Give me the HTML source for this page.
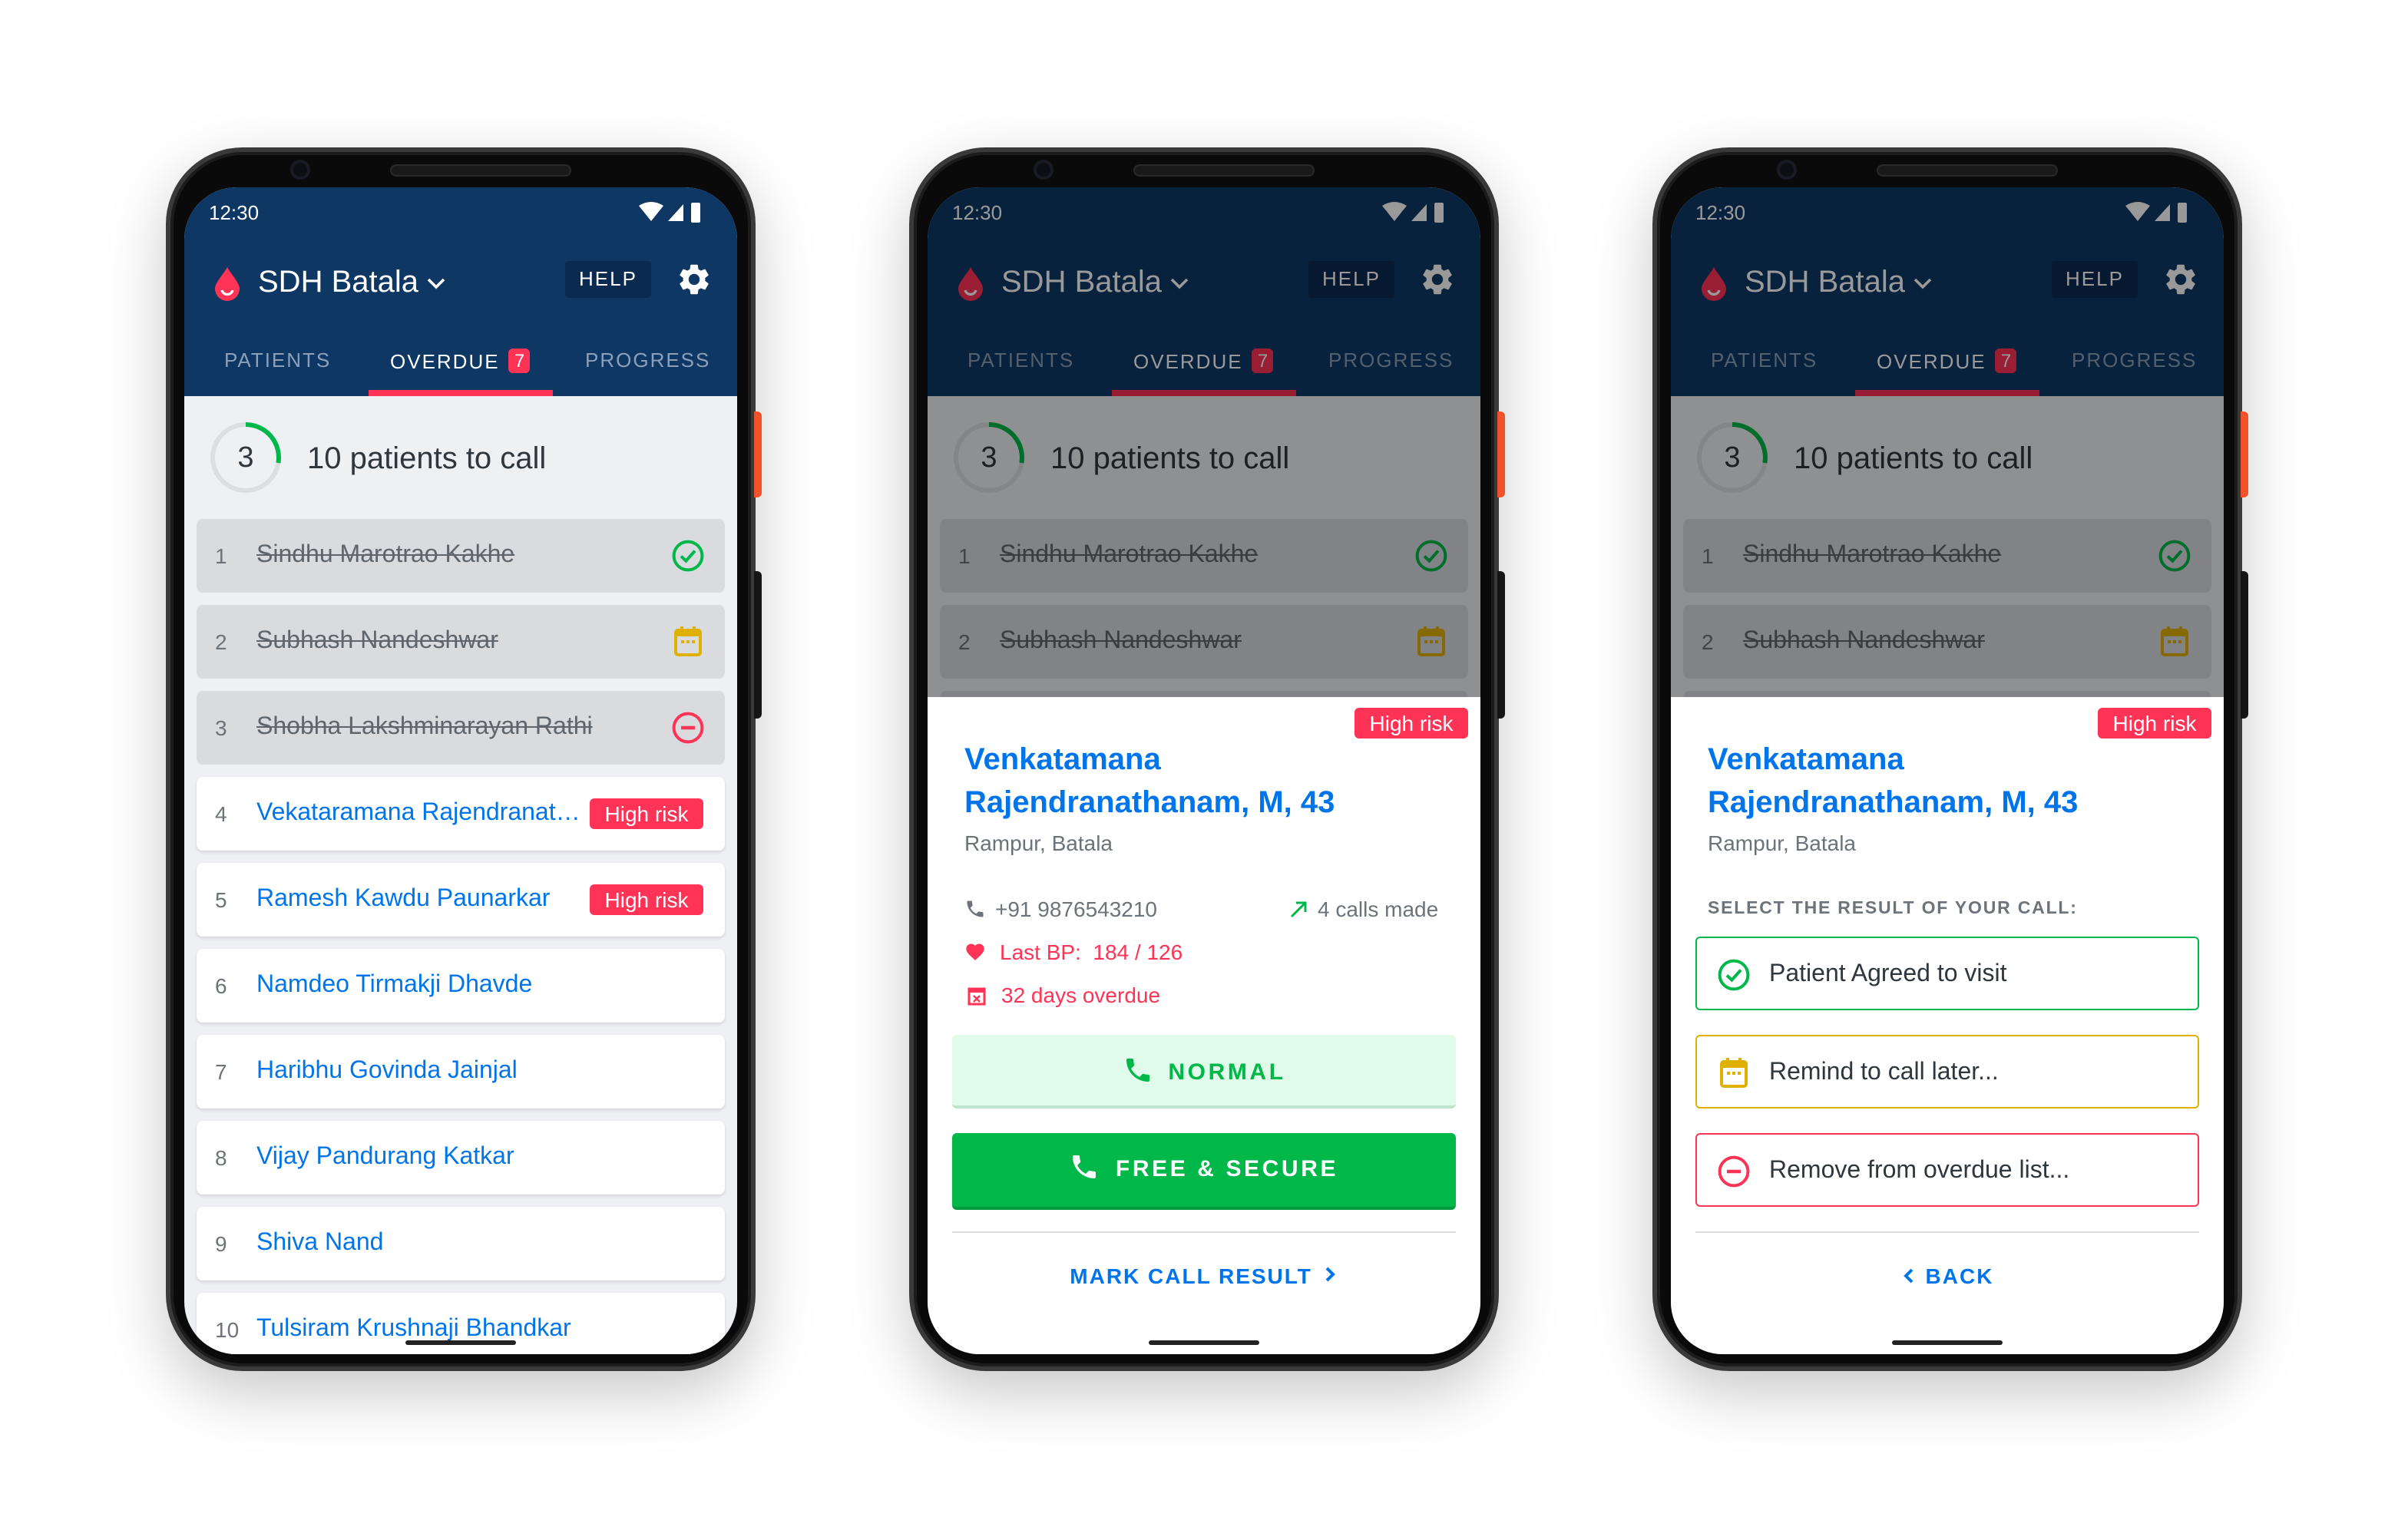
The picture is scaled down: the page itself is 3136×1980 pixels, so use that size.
<!DOCTYPE html>
<html><head><meta charset="utf-8">
<style>
*{margin:0;padding:0;box-sizing:border-box}
html,body{width:3136px;height:1980px;overflow:hidden;background:#fff}
#w{position:absolute;left:0;top:0;width:1568px;height:990px;transform:scale(2);transform-origin:0 0;font-family:"Liberation Sans",Arial,sans-serif}
.p{position:absolute;top:96px;width:384px;height:797px}
.fr{position:absolute;left:0;top:0;width:384px;height:797px;border-radius:50px;background:#0a0a0a;border:3px solid #3a3a3a;box-shadow:0 14px 40px rgba(0,0,0,.22),inset 0 0 0 2px #1c1c1c}
.btn1{position:absolute;left:383px;top:172px;width:5px;height:56px;background:#f0532a;border-radius:0 3px 3px 0}
.btn2{position:absolute;left:383px;top:276px;width:5px;height:96px;background:#151515;border-radius:0 3px 3px 0}
.cam{position:absolute;left:81px;top:8px;width:13px;height:13px;border-radius:50%;background:#0d0d14;border:2px solid #1a1a24}
.spk{position:absolute;left:146px;top:11px;width:118px;height:8px;border-radius:4px;background:#1a1a1a;border:1px solid #2a2a2a}
.scr{position:absolute;left:12px;top:26px;width:360px;height:760px;border-radius:34px;overflow:hidden;background:#eff0f3}
.hdr{position:absolute;left:0;top:0;width:360px;height:136px;background:#0e3764}
.a{position:absolute;white-space:nowrap}
.tm{left:16px;top:9px;color:#fff;font-size:13px}
.tt{left:48px;top:51px;color:#fff;font-size:20px}
.help{left:248px;top:48px;width:56px;height:24px;background:#0a2a50;border-radius:2px;color:#fff;font-size:13px;letter-spacing:1px;text-align:center;line-height:24px}
.tab{top:105px;font-size:13px;letter-spacing:1px;color:#8ba0bb}
.ul{left:120px;top:132px;width:120px;height:4px;background:#ff3355}
.bd{display:inline-block;width:14px;height:16px;background:#ff3355;border-radius:3px;color:#fff;text-align:center;line-height:16px;font-size:12px;letter-spacing:0;margin-left:6px;vertical-align:1px}
.ring{left:17px;top:153px;width:46px;height:46px}
.cnt{left:0;top:166px;width:80px;text-align:center;font-size:19px;color:#2f363d}
.ttl{left:80px;top:166px;font-size:20px;color:#2f363d}
.r{position:absolute;left:8px;width:344px;height:48px;border-radius:4px;background:#fff;box-shadow:0 1px 2px rgba(0,0,0,.12)}
.r.g{background:#d9dbdf;box-shadow:none}
.n{position:absolute;left:12px;top:16px;font-size:14px;color:#6c737a}
.nm{position:absolute;left:39px;top:15px;font-size:16px;color:#0075eb;white-space:nowrap}
.g .nm{color:#5f656c;text-decoration:line-through}
.hr{position:absolute;left:256px;top:14px;width:74px;height:20px;background:#ff3355;border-radius:3px;color:#fff;font-size:14px;text-align:center;line-height:20px}
.ic{position:absolute;left:309px;top:13px}
.ov{position:absolute;left:0;top:0;width:360px;height:760px;background:rgba(0,0,0,.4)}
.sh{position:absolute;left:0;top:332px;width:360px;height:428px;background:#fff}
.home{position:absolute;left:144px;top:751px;width:72px;height:3px;border-radius:2px;background:#222}
.sn{left:24px;font-size:20px;color:#0075eb;font-weight:bold}
.gry{color:#6c737a;font-size:14px}
.bt{position:absolute;left:16px;width:328px;height:48px;border-radius:3px;text-align:center;line-height:48px;font-size:15px;font-weight:bold;letter-spacing:1.8px}
.opt{position:absolute;left:16px;width:328px;height:48px;border-radius:3px;border:1.5px solid}
.opt span{position:absolute;left:47px;top:15px;font-size:16px;color:#2f363d}
.opt svg{position:absolute;left:13px;top:13px}
</style></head><body><div id="w">

<!-- ===== PHONE 1 ===== -->
<div class="p" style="left:108px">
<div class="fr"></div><div class="btn1"></div><div class="btn2"></div><div class="cam"></div><div class="spk"></div>
<div class="scr">
 <div class="hdr">
  <div class="a tm">12:30</div>
  <svg class="a" style="left:296px;top:9px" width="46" height="14" viewBox="0 0 46 14"><path d="M0 3 Q8 -2 16 3 L8 13Z" fill="#fff"/><path d="M19 13 L29 2 L29 13Z" fill="#fff"/><rect x="34" y="1" width="6" height="13" rx="1" fill="#fff"/></svg>
  <svg class="a" style="left:20px;top:52px" width="16" height="22" viewBox="0 0 16 22"><path d="M8 0 C6 4 0 10 0 14 a8 8 0 0 0 16 0 C16 10 10 4 8 0Z" fill="#ff3355"/><path d="M4.5 15 a3.6 3.6 0 0 0 7 0" stroke="#fff" stroke-width="1.6" fill="none"/></svg>
  <div class="a tt">SDH Batala <svg width="12" height="10" viewBox="0 0 12 10"><path d="M1 2 L6 7 L11 2" stroke="#fff" stroke-width="1.8" fill="none"/></svg></div>
  <div class="a help">HELP</div>
  <svg class="a" style="left:320px;top:48px" width="24" height="24" viewBox="0 0 24 24"><path fill="#fff" d="M19.14 12.94c.04-.3.06-.61.06-.94 0-.32-.02-.64-.07-.94l2.03-1.58c.18-.14.23-.41.12-.61l-1.92-3.32c-.12-.22-.37-.29-.59-.22l-2.39.96c-.5-.38-1.03-.7-1.62-.94l-.36-2.54c-.04-.24-.24-.41-.48-.41h-3.84c-.24 0-.43.17-.47.41l-.36 2.54c-.59.24-1.13.57-1.62.94l-2.39-.96c-.22-.08-.47 0-.59.22L2.74 8.87c-.12.21-.08.47.12.61l2.03 1.58c-.05.3-.09.63-.09.94s.02.64.07.94l-2.03 1.58c-.18.14-.23.41-.12.61l1.92 3.32c.12.22.37.29.59.22l2.39-.96c.5.38 1.03.7 1.62.94l.36 2.54c.05.24.24.41.48.41h3.84c.24 0 .44-.17.47-.41l.36-2.54c.59-.24 1.13-.56 1.62-.94l2.39.96c.22.08.47 0 .59-.22l1.92-3.32c.12-.22.07-.47-.12-.61l-2.01-1.58zM12 15.6c-1.98 0-3.6-1.62-3.6-3.6s1.62-3.6 3.6-3.6 3.6 1.62 3.6 3.6-1.62 3.6-3.6 3.6z"/></svg>
  <div class="a tab" style="left:26px">PATIENTS</div>
  <div class="a tab" style="left:134px;color:#fff">OVERDUE<span class="bd">7</span></div>
  <div class="a tab" style="left:261px">PROGRESS</div>
  <div class="a ul"></div>
 </div>
 <svg class="a ring" viewBox="0 0 46 46"><circle cx="23" cy="23" r="21.5" stroke="#dcdee1" stroke-width="3" fill="none"/><path d="M23 1.5 A21.5 21.5 0 0 1 44.2 26.5" stroke="#00b849" stroke-width="3" fill="none"/></svg>
 <div class="a cnt">3</div>
 <div class="a ttl">10 patients to call</div>

 <div class="r g" style="top:216px"><div class="n">1</div><div class="nm">Sindhu Marotrao Kakhe</div><svg class="ic" width="22" height="22" viewBox="0 0 22 22"><circle cx="11" cy="11" r="9.2" stroke="#00b849" stroke-width="2" fill="none"/><path d="M6.5 11.3 L9.7 14.3 L15.5 7.8" stroke="#00b849" stroke-width="2" fill="none"/></svg></div>
 <div class="r g" style="top:272px"><div class="n">2</div><div class="nm">Subhash Nandeshwar</div><svg class="ic" width="22" height="22" viewBox="0 0 22 22"><rect x="3" y="3.5" width="16" height="16" rx="1.5" stroke="#e0b000" stroke-width="2" fill="none"/><rect x="3" y="3.5" width="16" height="4" fill="#e0b000"/><rect x="6" y="1" width="2" height="4" fill="#e0b000"/><rect x="14" y="1" width="2" height="4" fill="#e0b000"/><rect x="6.5" y="10" width="2" height="2" fill="#e0b000"/><rect x="10" y="10" width="2" height="2" fill="#e0b000"/><rect x="13.5" y="10" width="2" height="2" fill="#e0b000"/></svg></div>
 <div class="r g" style="top:328px"><div class="n">3</div><div class="nm">Shobha Lakshminarayan Rathi</div><svg class="ic" width="22" height="22" viewBox="0 0 22 22"><circle cx="11" cy="11" r="9.2" stroke="#ff3355" stroke-width="2" fill="none"/><path d="M6.5 11 H15.5" stroke="#ff3355" stroke-width="2.2"/></svg></div>
 <div class="r" style="top:384px"><div class="n">4</div><div class="nm">Vekataramana Rajendranat…</div><div class="hr">High risk</div></div>
 <div class="r" style="top:440px"><div class="n">5</div><div class="nm">Ramesh Kawdu Paunarkar</div><div class="hr">High risk</div></div>
 <div class="r" style="top:496px"><div class="n">6</div><div class="nm">Namdeo Tirmakji Dhavde</div></div>
 <div class="r" style="top:552px"><div class="n">7</div><div class="nm">Haribhu Govinda Jainjal</div></div>
 <div class="r" style="top:608px"><div class="n">8</div><div class="nm">Vijay Pandurang Katkar</div></div>
 <div class="r" style="top:664px"><div class="n">9</div><div class="nm">Shiva Nand</div></div>
 <div class="r" style="top:720px"><div class="n">10</div><div class="nm">Tulsiram Krushnaji Bhandkar</div></div>
 <div class="home"></div>
</div></div>

<!-- ===== PHONE 2 ===== -->
<div class="p" style="left:592px">
<div class="fr"></div><div class="btn1"></div><div class="btn2"></div><div class="cam"></div><div class="spk"></div>
<div class="scr">
 <div class="hdr">
  <div class="a tm">12:30</div>
  <svg class="a" style="left:296px;top:9px" width="46" height="14" viewBox="0 0 46 14"><path d="M0 3 Q8 -2 16 3 L8 13Z" fill="#fff"/><path d="M19 13 L29 2 L29 13Z" fill="#fff"/><rect x="34" y="1" width="6" height="13" rx="1" fill="#fff"/></svg>
  <svg class="a" style="left:20px;top:52px" width="16" height="22" viewBox="0 0 16 22"><path d="M8 0 C6 4 0 10 0 14 a8 8 0 0 0 16 0 C16 10 10 4 8 0Z" fill="#ff3355"/><path d="M4.5 15 a3.6 3.6 0 0 0 7 0" stroke="#fff" stroke-width="1.6" fill="none"/></svg>
  <div class="a tt">SDH Batala <svg width="12" height="10" viewBox="0 0 12 10"><path d="M1 2 L6 7 L11 2" stroke="#fff" stroke-width="1.8" fill="none"/></svg></div>
  <div class="a help">HELP</div>
  <svg class="a" style="left:320px;top:48px" width="24" height="24" viewBox="0 0 24 24"><path fill="#fff" d="M19.14 12.94c.04-.3.06-.61.06-.94 0-.32-.02-.64-.07-.94l2.03-1.58c.18-.14.23-.41.12-.61l-1.92-3.32c-.12-.22-.37-.29-.59-.22l-2.39.96c-.5-.38-1.03-.7-1.62-.94l-.36-2.54c-.04-.24-.24-.41-.48-.41h-3.84c-.24 0-.43.17-.47.41l-.36 2.54c-.59.24-1.13.57-1.62.94l-2.39-.96c-.22-.08-.47 0-.59.22L2.74 8.87c-.12.21-.08.47.12.61l2.03 1.58c-.05.3-.09.63-.09.94s.02.64.07.94l-2.03 1.58c-.18.14-.23.41-.12.61l1.92 3.32c.12.22.37.29.59.22l2.39-.96c.5.38 1.03.7 1.62.94l.36 2.54c.05.24.24.41.48.41h3.84c.24 0 .44-.17.47-.41l.36-2.54c.59-.24 1.13-.56 1.62-.94l2.39.96c.22.08.47 0 .59-.22l1.92-3.32c.12-.22.07-.47-.12-.61l-2.01-1.58zM12 15.6c-1.98 0-3.6-1.62-3.6-3.6s1.62-3.6 3.6-3.6 3.6 1.62 3.6 3.6-1.62 3.6-3.6 3.6z"/></svg>
  <div class="a tab" style="left:26px">PATIENTS</div>
  <div class="a tab" style="left:134px;color:#fff">OVERDUE<span class="bd">7</span></div>
  <div class="a tab" style="left:261px">PROGRESS</div>
  <div class="a ul"></div>
 </div>
 <svg class="a ring" viewBox="0 0 46 46"><circle cx="23" cy="23" r="21.5" stroke="#dcdee1" stroke-width="3" fill="none"/><path d="M23 1.5 A21.5 21.5 0 0 1 44.2 26.5" stroke="#00b849" stroke-width="3" fill="none"/></svg>
 <div class="a cnt">3</div>
 <div class="a ttl">10 patients to call</div>
 <div class="r g" style="top:216px"><div class="n">1</div><div class="nm">Sindhu Marotrao Kakhe</div><svg class="ic" width="22" height="22" viewBox="0 0 22 22"><circle cx="11" cy="11" r="9.2" stroke="#00b849" stroke-width="2" fill="none"/><path d="M6.5 11.3 L9.7 14.3 L15.5 7.8" stroke="#00b849" stroke-width="2" fill="none"/></svg></div>
 <div class="r g" style="top:272px"><div class="n">2</div><div class="nm">Subhash Nandeshwar</div><svg class="ic" width="22" height="22" viewBox="0 0 22 22"><rect x="3" y="3.5" width="16" height="16" rx="1.5" stroke="#e0b000" stroke-width="2" fill="none"/><rect x="3" y="3.5" width="16" height="4" fill="#e0b000"/><rect x="6" y="1" width="2" height="4" fill="#e0b000"/><rect x="14" y="1" width="2" height="4" fill="#e0b000"/><rect x="6.5" y="10" width="2" height="2" fill="#e0b000"/><rect x="10" y="10" width="2" height="2" fill="#e0b000"/><rect x="13.5" y="10" width="2" height="2" fill="#e0b000"/></svg></div>
 <div class="r g" style="top:328px"></div>
 <div class="ov"></div>
 <div class="sh">
  <div class="a" style="left:278px;top:7px;width:74px;height:20px;background:#ff3355;border-radius:3px;color:#fff;font-size:14px;text-align:center;line-height:20px">High risk</div>
  <div class="a sn" style="top:30px">Venkatamana</div>
  <div class="a sn" style="top:58px">Rajendranathanam, M, 43</div>
  <div class="a gry" style="left:24px;top:87px">Rampur, Batala</div>
  <svg class="a" style="left:24px;top:131px" width="14" height="14" viewBox="0 0 24 24"><path fill="#6c737a" d="M6.62 10.79c1.44 2.83 3.76 5.14 6.59 6.59l2.2-2.2c.27-.27.67-.36 1.02-.24 1.12.37 2.33.57 3.57.57.55 0 1 .45 1 1V20c0 .55-.45 1-1 1-9.39 0-17-7.61-17-17 0-.55.45-1 1-1h3.5c.55 0 1 .45 1 1 0 1.25.2 2.45.57 3.57.11.35.03.74-.25 1.02l-2.2 2.2z"/></svg>
  <div class="a gry" style="left:44px;top:130px">+91 9876543210</div>
  <svg class="a" style="left:236px;top:132px" width="12" height="12" viewBox="0 0 12 12"><path d="M1 11 L10 2 M4 2 H10 V8" stroke="#00b849" stroke-width="1.5" fill="none"/></svg>
  <div class="a gry" style="left:254px;top:130px">4 calls made</div>
  <svg class="a" style="left:24px;top:159px" width="14" height="14" viewBox="0 0 24 24"><path fill="#ff3355" d="M12 21.35l-1.45-1.32C5.4 15.36 2 12.28 2 8.5 2 5.42 4.42 3 7.5 3c1.74 0 3.41.81 4.5 2.09C13.09 3.81 14.76 3 16.5 3 19.58 3 22 5.42 22 8.5c0 3.78-3.4 6.86-8.55 11.54L12 21.35z"/></svg>
  <div class="a" style="left:47px;top:158px;font-size:14px;color:#ff3355">Last BP:&nbsp; 184 / 126</div>
  <svg class="a" style="left:26px;top:188px" width="12" height="13" viewBox="0 0 12 13"><rect x="1" y="2" width="10" height="10" stroke="#ff3355" stroke-width="1.5" fill="none"/><rect x="1" y="2" width="10" height="2.5" fill="#ff3355"/><path d="M4 6.5 L8 10.5 M8 6.5 L4 10.5" stroke="#ff3355" stroke-width="1.2"/></svg>
  <div class="a" style="left:48px;top:186px;font-size:14px;color:#ff3355">32 days overdue</div>
  <div class="bt" style="top:220px;background:#e0fbea;color:#00b849;border-bottom:2px solid #bfe3cc;line-height:50px"><svg width="20" height="20" viewBox="0 0 24 24" style="vertical-align:-4px;margin-right:10px"><path fill="#00b849" d="M6.62 10.79c1.44 2.83 3.76 5.14 6.59 6.59l2.2-2.2c.27-.27.67-.36 1.02-.24 1.12.37 2.33.57 3.57.57.55 0 1 .45 1 1V20c0 .55-.45 1-1 1-9.39 0-17-7.61-17-17 0-.55.45-1 1-1h3.5c.55 0 1 .45 1 1 0 1.25.2 2.45.57 3.57.11.35.03.74-.25 1.02l-2.2 2.2z"/></svg>NORMAL</div>
  <div class="bt" style="top:284px;height:50px;background:#00b849;color:#fff;border-bottom:2px solid #009a3c;line-height:48px"><svg width="20" height="20" viewBox="0 0 24 24" style="vertical-align:-4px;margin-right:10px"><path fill="#fff" d="M6.62 10.79c1.44 2.83 3.76 5.14 6.59 6.59l2.2-2.2c.27-.27.67-.36 1.02-.24 1.12.37 2.33.57 3.57.57.55 0 1 .45 1 1V20c0 .55-.45 1-1 1-9.39 0-17-7.61-17-17 0-.55.45-1 1-1h3.5c.55 0 1 .45 1 1 0 1.25.2 2.45.57 3.57.11.35.03.74-.25 1.02l-2.2 2.2z"/></svg>FREE &amp; SECURE</div>
  <div class="a" style="left:16px;top:348px;width:328px;height:1px;background:#dcdee1"></div>
  <div class="a" style="left:0;top:369px;width:360px;text-align:center;font-size:14px;font-weight:bold;color:#0075eb;letter-spacing:1px">MARK CALL RESULT <svg width="10" height="12" viewBox="0 0 10 12" style="margin-left:2px"><path d="M3 2 L7 6 L3 10" stroke="#0075eb" stroke-width="2" fill="none"/></svg></div>
 </div>
 <div class="home"></div>
</div></div>

<!-- ===== PHONE 3 ===== -->
<div class="p" style="left:1076px">
<div class="fr"></div><div class="btn1"></div><div class="btn2"></div><div class="cam"></div><div class="spk"></div>
<div class="scr">
 <div class="hdr">
  <div class="a tm">12:30</div>
  <svg class="a" style="left:296px;top:9px" width="46" height="14" viewBox="0 0 46 14"><path d="M0 3 Q8 -2 16 3 L8 13Z" fill="#fff"/><path d="M19 13 L29 2 L29 13Z" fill="#fff"/><rect x="34" y="1" width="6" height="13" rx="1" fill="#fff"/></svg>
  <svg class="a" style="left:20px;top:52px" width="16" height="22" viewBox="0 0 16 22"><path d="M8 0 C6 4 0 10 0 14 a8 8 0 0 0 16 0 C16 10 10 4 8 0Z" fill="#ff3355"/><path d="M4.5 15 a3.6 3.6 0 0 0 7 0" stroke="#fff" stroke-width="1.6" fill="none"/></svg>
  <div class="a tt">SDH Batala <svg width="12" height="10" viewBox="0 0 12 10"><path d="M1 2 L6 7 L11 2" stroke="#fff" stroke-width="1.8" fill="none"/></svg></div>
  <div class="a help">HELP</div>
  <svg class="a" style="left:320px;top:48px" width="24" height="24" viewBox="0 0 24 24"><path fill="#fff" d="M19.14 12.94c.04-.3.06-.61.06-.94 0-.32-.02-.64-.07-.94l2.03-1.58c.18-.14.23-.41.12-.61l-1.92-3.32c-.12-.22-.37-.29-.59-.22l-2.39.96c-.5-.38-1.03-.7-1.62-.94l-.36-2.54c-.04-.24-.24-.41-.48-.41h-3.84c-.24 0-.43.17-.47.41l-.36 2.54c-.59.24-1.13.57-1.62.94l-2.39-.96c-.22-.08-.47 0-.59.22L2.74 8.87c-.12.21-.08.47.12.61l2.03 1.58c-.05.3-.09.63-.09.94s.02.64.07.94l-2.03 1.58c-.18.14-.23.41-.12.61l1.92 3.32c.12.22.37.29.59.22l2.39-.96c.5.38 1.03.7 1.62.94l.36 2.54c.05.24.24.41.48.41h3.84c.24 0 .44-.17.47-.41l.36-2.54c.59-.24 1.13-.56 1.62-.94l2.39.96c.22.08.47 0 .59-.22l1.92-3.32c.12-.22.07-.47-.12-.61l-2.01-1.58zM12 15.6c-1.98 0-3.6-1.62-3.6-3.6s1.62-3.6 3.6-3.6 3.6 1.62 3.6 3.6-1.62 3.6-3.6 3.6z"/></svg>
  <div class="a tab" style="left:26px">PATIENTS</div>
  <div class="a tab" style="left:134px;color:#fff">OVERDUE<span class="bd">7</span></div>
  <div class="a tab" style="left:261px">PROGRESS</div>
  <div class="a ul"></div>
 </div>
 <svg class="a ring" viewBox="0 0 46 46"><circle cx="23" cy="23" r="21.5" stroke="#dcdee1" stroke-width="3" fill="none"/><path d="M23 1.5 A21.5 21.5 0 0 1 44.2 26.5" stroke="#00b849" stroke-width="3" fill="none"/></svg>
 <div class="a cnt">3</div>
 <div class="a ttl">10 patients to call</div>
 <div class="r g" style="top:216px"><div class="n">1</div><div class="nm">Sindhu Marotrao Kakhe</div><svg class="ic" width="22" height="22" viewBox="0 0 22 22"><circle cx="11" cy="11" r="9.2" stroke="#00b849" stroke-width="2" fill="none"/><path d="M6.5 11.3 L9.7 14.3 L15.5 7.8" stroke="#00b849" stroke-width="2" fill="none"/></svg></div>
 <div class="r g" style="top:272px"><div class="n">2</div><div class="nm">Subhash Nandeshwar</div><svg class="ic" width="22" height="22" viewBox="0 0 22 22"><rect x="3" y="3.5" width="16" height="16" rx="1.5" stroke="#e0b000" stroke-width="2" fill="none"/><rect x="3" y="3.5" width="16" height="4" fill="#e0b000"/><rect x="6" y="1" width="2" height="4" fill="#e0b000"/><rect x="14" y="1" width="2" height="4" fill="#e0b000"/><rect x="6.5" y="10" width="2" height="2" fill="#e0b000"/><rect x="10" y="10" width="2" height="2" fill="#e0b000"/><rect x="13.5" y="10" width="2" height="2" fill="#e0b000"/></svg></div>
 <div class="r g" style="top:328px"></div>
 <div class="ov"></div>
 <div class="sh">
  <div class="a" style="left:278px;top:7px;width:74px;height:20px;background:#ff3355;border-radius:3px;color:#fff;font-size:14px;text-align:center;line-height:20px">High risk</div>
  <div class="a sn" style="top:30px">Venkatamana</div>
  <div class="a sn" style="top:58px">Rajendranathanam, M, 43</div>
  <div class="a gry" style="left:24px;top:87px">Rampur, Batala</div>
  <div class="a" style="left:24px;top:132px;font-size:11.5px;letter-spacing:0.9px;color:#6c737a;font-weight:bold">SELECT THE RESULT OF YOUR CALL:</div>
  <div class="opt" style="top:156px;border-color:#00b849"><svg width="22" height="22" viewBox="0 0 22 22"><circle cx="11" cy="11" r="9.2" stroke="#00b849" stroke-width="2" fill="none"/><path d="M6.5 11.3 L9.7 14.3 L15.5 7.8" stroke="#00b849" stroke-width="2" fill="none"/></svg><span>Patient Agreed to visit</span></div>
  <div class="opt" style="top:220px;border-color:#e0b000"><svg width="22" height="22" viewBox="0 0 22 22"><rect x="3" y="3.5" width="16" height="16" rx="1.5" stroke="#e0b000" stroke-width="2" fill="none"/><rect x="3" y="3.5" width="16" height="4" fill="#e0b000"/><rect x="6" y="1" width="2" height="4" fill="#e0b000"/><rect x="14" y="1" width="2" height="4" fill="#e0b000"/><rect x="6.5" y="10" width="2" height="2" fill="#e0b000"/><rect x="10" y="10" width="2" height="2" fill="#e0b000"/><rect x="13.5" y="10" width="2" height="2" fill="#e0b000"/></svg><span>Remind to call later...</span></div>
  <div class="opt" style="top:284px;border-color:#ff3355"><svg width="22" height="22" viewBox="0 0 22 22"><circle cx="11" cy="11" r="9.2" stroke="#ff3355" stroke-width="2" fill="none"/><path d="M6.5 11 H15.5" stroke="#ff3355" stroke-width="2.2"/></svg><span>Remove from overdue list...</span></div>
  <div class="a" style="left:16px;top:348px;width:328px;height:1px;background:#dcdee1"></div>
  <div class="a" style="left:0;top:369px;width:360px;text-align:center;font-size:14px;font-weight:bold;color:#0075eb;letter-spacing:1px"><svg width="10" height="12" viewBox="0 0 10 12" style="margin-right:6px;vertical-align:-1px"><path d="M7 2 L3 6 L7 10" stroke="#0075eb" stroke-width="2" fill="none"/></svg>BACK</div>
 </div>
 <div class="home"></div>
</div></div>

</div></body></html>
